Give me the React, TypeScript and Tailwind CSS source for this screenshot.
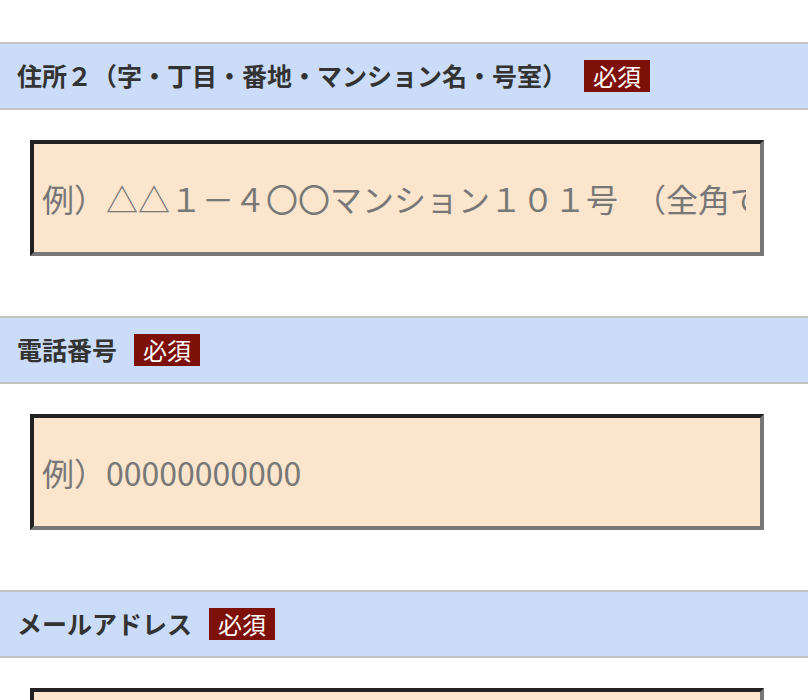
const jp = '"Noto Sans CJK JP", "Noto Sans", sans-serif'

type Field = {
  label: string
  placeholder: string
  type?: string
}

const fields: Field[] = [
  { label: '住所２（字・丁目・番地・マンション名・号室）', placeholder: '例）△△１－４〇〇マンション１０１号　（全角でご入力ください）' },
  { label: '電話番号', placeholder: '例）00000000000', type: 'tel' },
  { label: 'メールアドレス', placeholder: '例）sample@example.com', type: 'email' },
]

function Required() {
  return (
    <span className="ml-[17px] inline-block h-8 bg-[#7d1008] px-[9px] text-[24px] leading-8 font-normal text-white">
      必須
    </span>
  )
}

export default function App() {
  return (
    <div className="min-h-screen bg-white pt-[42px]" style={{ fontFamily: jp }}>
      {fields.map((f) => (
        <div key={f.label} className="pb-[60px]">
          {/* ── 見出し ── */}
          <div className="flex h-[68px] items-center border-y-2 border-[#c3c3c3] bg-[#cadcf8] pl-[17px]">
            <span className="text-[25px] font-bold text-[#333]">{f.label}</span>
            <Required />
          </div>

          {/* ── 入力欄 ── */}
          <div className="pt-[30px] pl-[30px]">
            <input
              type={f.type ?? 'text'}
              placeholder={f.placeholder}
              className="block h-[116px] w-[734px] border-4 border-t-[#222] border-l-[#222] border-r-[#777] border-b-[#777] bg-[#fce5cd] pl-2 pr-[14px] text-[32px] text-[#333] outline-none placeholder:text-[#777]"
              style={{ fontFamily: jp }}
            />
          </div>
        </div>
      ))}
    </div>
  )
}
